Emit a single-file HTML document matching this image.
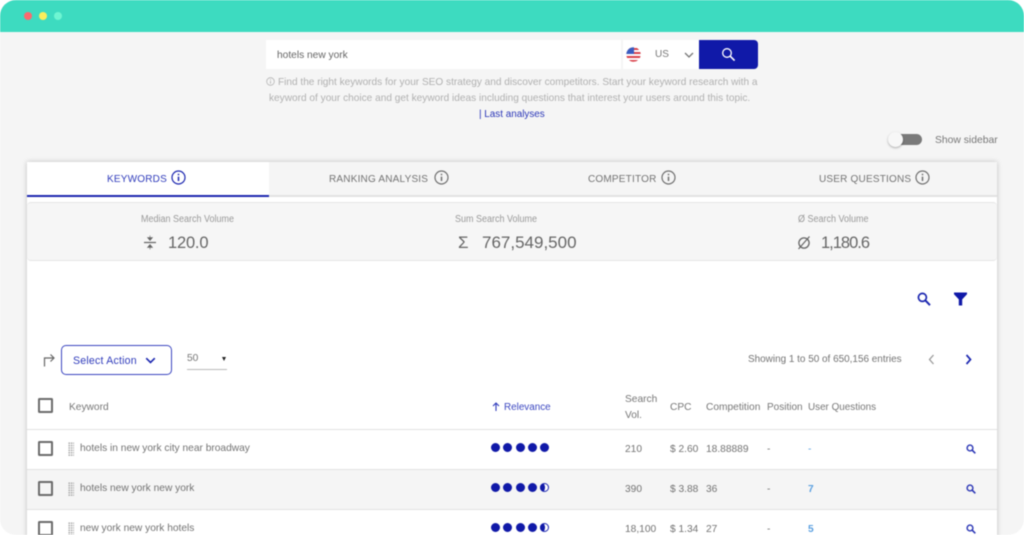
<!DOCTYPE html>
<html><head><meta charset="utf-8"><style>
html,body{margin:0;padding:0;background:#fff}
body{width:1024px;height:535px;overflow:hidden;position:relative;font-family:"Liberation Sans",sans-serif}
#w{position:absolute;left:0;top:0;width:1024px;height:535px;background:#f5f5f5;border-radius:16px;overflow:hidden;filter:blur(.4px)}
.a,.a2{position:absolute;white-space:nowrap}
.t{position:absolute;white-space:nowrap;font-size:10.2px;color:#737373;line-height:14px;transform:translateY(1px)}
.dot{position:absolute;width:9px;height:9px;border-radius:50%;background:#1019a8}
.cb{position:absolute;left:38px;width:11px;height:11px;border:2px solid #6b6b6b;border-radius:1.5px;background:transparent}
.row{position:absolute;left:27px;width:970px;height:39px;border-bottom:1px solid #e2e2e2}
.tab{position:absolute;top:173px;font-size:10px;letter-spacing:.2px;color:#737373;line-height:14px;white-space:nowrap}
svg{position:absolute;overflow:visible}
.lb{position:absolute;font-size:10px;color:#999;top:213px;line-height:13px;white-space:nowrap;transform:scaleX(.9);transform-origin:0 0}
.val{position:absolute;font-size:17px;color:#666;top:233px;line-height:20px;white-space:nowrap}
.grip{position:absolute;left:68px;width:6px;height:14px;background-image:radial-gradient(circle,#a8a8a8 0.8px,transparent 1px);background-size:2.4px 2.4px}
</style></head><body><div id="w">

<div class="a" style="left:0;top:0;width:1024px;height:32px;background:#3ddbc0"></div>
<div class="a" style="left:24px;top:12px;width:8px;height:8px;border-radius:50%;background:#fb6a6f"></div>
<div class="a" style="left:39px;top:12px;width:8px;height:8px;border-radius:50%;background:#fbee5b"></div>
<div class="a" style="left:54px;top:12px;width:8px;height:8px;border-radius:50%;background:#6ef5d2"></div>

<div class="a" style="left:266px;top:40px;width:355px;height:29px;background:#fff"></div>
<div class="a" style="left:623px;top:40px;width:77px;height:29px;background:#fff"></div>
<div class="t" style="left:277px;top:48px;font-size:10.2px;color:#666">hotels new york</div>

<svg style="left:626px;top:47px" width="15" height="15" viewBox="0 0 15 15">
<defs><clipPath id="fc"><circle cx="7.5" cy="7.5" r="7.2"/></clipPath></defs>
<g clip-path="url(#fc)"><rect width="15" height="15" fill="#fff"/>
<rect y="1" width="15" height="2" fill="#d9404a"/><rect y="5" width="15" height="2" fill="#d9404a"/><rect y="9" width="15" height="2" fill="#d9404a"/><rect y="13" width="15" height="2" fill="#d9404a"/>
<rect width="8" height="7" fill="#3a5cc0"/></g></svg>
<div class="t" style="left:655px;top:47px;font-size:10px;color:#777">US</div>
<svg style="left:684px;top:52px" width="10" height="6" viewBox="0 0 10 6"><path d="M1 1l4 4 4-4" fill="none" stroke="#777" stroke-width="1.3"/></svg>
<div class="a" style="left:699px;top:40px;width:59px;height:29px;background:#1019a8;border-radius:0 4px 4px 0"></div>
<svg style="left:721px;top:47px" width="15" height="15" viewBox="0 0 15 15"><circle cx="6" cy="6" r="4.3" fill="none" stroke="#fff" stroke-width="1.3"/><path d="M9.2 9.2l4.4 4.4" stroke="#fff" stroke-width="1.6"/></svg>

<svg style="left:266px;top:77px" width="9" height="9" viewBox="0 0 9 9"><circle cx="4.5" cy="4.5" r="3.8" fill="none" stroke="#b5b5b5" stroke-width=".8"/><path d="M4.5 4v2.6M4.5 2.3v1" stroke="#b5b5b5" stroke-width=".9"/></svg>
<div class="t" style="left:278px;top:75px;font-size:10.08px;color:#b0b0b0">Find the right keywords for your SEO strategy and discover competitors. Start your keyword research with a</div>
<div class="t" style="left:269px;top:91px;font-size:10.08px;color:#b0b0b0;letter-spacing:.01px">keyword of your choice and get keyword ideas including questions that interest your users around this topic.</div>
<div class="t" style="left:479px;top:107px;font-size:9.9px;color:#2b37b8">| Last analyses</div>

<div class="a" style="left:892px;top:134px;width:30px;height:11px;background:#7a7a7a;border-radius:6px"></div>
<div class="a" style="left:888px;top:132px;width:15px;height:15px;background:#f7f7f7;border-radius:50%;box-shadow:0 1px 2px rgba(0,0,0,.3)"></div>
<div class="t" style="left:935px;top:133px;font-size:10.35px;color:#777">Show sidebar</div>

<!-- card -->
<div class="a" style="left:27px;top:162px;width:970px;height:380px;background:#fff;box-shadow:0 0 5px rgba(0,0,0,.22)"></div>
<div class="a" style="left:269px;top:162px;width:728px;height:33px;background:#f5f5f5;border-bottom:2px solid #e2e2e2"></div>
<div class="a" style="left:27px;top:195px;width:242px;height:2px;background:#1c27b0"></div>
<div class="a" style="left:27px;top:202px;width:970px;height:57px;background:#f6f6f6;border:1px solid #e6e6e6;border-width:1px 0;border-radius:4px"></div>

<div class="tab" style="left:107px;color:#2f3bbb">KEYWORDS</div>
<svg style="left:171px;top:170px" width="15" height="15" viewBox="0 0 15 15"><circle cx="7.5" cy="7.5" r="6.5" fill="none" stroke="#1c27b0" stroke-width="1.2"/><path d="M7.5 6.6v4.4M7.5 3.8v1.5" stroke="#1c27b0" stroke-width="1.5"/></svg>
<div class="tab" style="left:329px">RANKING ANALYSIS</div>
<svg style="left:434px;top:170px" width="15" height="15" viewBox="0 0 15 15"><circle cx="7.5" cy="7.5" r="6.5" fill="none" stroke="#707070" stroke-width="1.2"/><path d="M7.5 6.6v4.4M7.5 3.8v1.5" stroke="#707070" stroke-width="1.5"/></svg>
<div class="tab" style="left:588px">COMPETITOR</div>
<svg style="left:661px;top:170px" width="15" height="15" viewBox="0 0 15 15"><circle cx="7.5" cy="7.5" r="6.5" fill="none" stroke="#707070" stroke-width="1.2"/><path d="M7.5 6.6v4.4M7.5 3.8v1.5" stroke="#707070" stroke-width="1.5"/></svg>
<div class="tab" style="left:819px">USER QUESTIONS</div>
<svg style="left:915px;top:170px" width="15" height="15" viewBox="0 0 15 15"><circle cx="7.5" cy="7.5" r="6.5" fill="none" stroke="#707070" stroke-width="1.2"/><path d="M7.5 6.6v4.4M7.5 3.8v1.5" stroke="#707070" stroke-width="1.5"/></svg>

<div class="lb" style="left:141px">Median Search Volume</div>
<div class="lb" style="left:455px">Sum Search Volume</div>
<div class="lb" style="left:798px">Ø Search Volume</div>
<svg style="left:143px;top:235px" width="14" height="15" viewBox="0 0 14 15"><path d="M1 7.5h12" stroke="#666" stroke-width="1.2"/><path d="M7 .5v2M4.5 2.5h5L7 5.5zM4.5 12.5h5L7 9.5zM7 12.5v2" fill="#666" stroke="#666" stroke-width=".6"/></svg>
<div class="val" style="left:168px;font-size:16.5px;letter-spacing:-.2px">120.0</div>
<div class="a" style="left:458px;top:233px;font-size:17px;line-height:20px;color:#666">Σ</div>
<div class="val" style="left:482px">767,549,500</div>
<svg style="left:797px;top:235px" width="14" height="15" viewBox="0 0 14 15"><circle cx="7" cy="8" r="5.1" fill="none" stroke="#666" stroke-width="1.3"/><path d="M1.5 14L12.5 1.5" stroke="#666" stroke-width="1.2"/></svg>
<div class="val" style="left:821px;font-size:16.5px;letter-spacing:-1px">1,180.6</div>

<svg style="left:917px;top:292px" width="14" height="14" viewBox="0 0 14 14"><circle cx="5.4" cy="5.4" r="4" fill="none" stroke="#1c27b0" stroke-width="1.7"/><path d="M8.4 8.4l4.6 4.8" stroke="#1c27b0" stroke-width="2"/></svg>
<svg style="left:954px;top:292px" width="13" height="14" viewBox="0 0 13 14"><path d="M0 .5h13v1.8L8.2 7.4V13.5H4.8V7.4L0 2.3z" fill="#1019a8"/></svg>

<svg style="left:43px;top:353px" width="13" height="14" viewBox="0 0 13 14"><path d="M1.5 13.5V5h9M7.5 1.5L11 5 7.5 8.5" fill="none" stroke="#666" stroke-width="1.2"/></svg>
<div class="a" style="left:61px;top:345px;width:109px;height:28px;border:1px solid #3b46c0;border-radius:5px"></div>
<div class="t" style="left:73px;top:353px;font-size:10.6px;color:#2f3bbb;letter-spacing:.2px">Select Action</div>
<svg style="left:145px;top:357px" width="11" height="7" viewBox="0 0 11 7"><path d="M1.2 1.2l4.3 4.3 4.3-4.3" fill="none" stroke="#1c27b0" stroke-width="1.6"/></svg>
<div class="t" style="left:187px;top:351px;font-size:10.2px;color:#777">50</div>
<div class="a" style="left:222px;top:357px;width:0;height:0;border:2.5px solid transparent;border-top:4px solid #222;border-bottom:0"></div>
<div class="a" style="left:187px;top:369px;width:40px;height:1px;background:#bbb"></div>

<div class="t" style="left:748px;top:352px;font-size:9.95px;color:#737373">Showing 1 to 50 of 650,156 entries</div>
<svg style="left:928px;top:354px" width="7" height="11" viewBox="0 0 7 11"><path d="M5.5 1L1.5 5.5l4 4.5" fill="none" stroke="#999" stroke-width="1.3"/></svg>
<svg style="left:965px;top:354px" width="7" height="11" viewBox="0 0 7 11"><path d="M1.5 1l4 4.5-4 4.5" fill="none" stroke="#1c27b0" stroke-width="1.7"/></svg>

<div class="cb" style="top:398px"></div>
<div class="t" style="left:69px;top:400px;color:#777">Keyword</div>
<svg style="left:492px;top:402px" width="8" height="9" viewBox="0 0 8 9"><path d="M4 9V1.2M1 4l3-3 3 3" fill="none" stroke="#2f3bbb" stroke-width="1.1"/></svg>
<div class="t" style="left:504px;top:400px;color:#3a46c0;font-size:9.9px">Relevance</div>
<div class="t" style="left:625px;top:391px;color:#777;line-height:16px">Search<br>Vol.</div>
<div class="t" style="left:670px;top:400px;color:#777">CPC</div>
<div class="t" style="left:706px;top:400px;color:#777">Competition</div>
<div class="t" style="left:767px;top:400px;color:#777;font-size:10px">Position</div>
<div class="t" style="left:808px;top:400px;color:#777;font-size:9.9px">User Questions</div>

<div class="row" style="top:390px;height:39px"></div>
<div class="row" style="top:430px"></div>
<div class="row" style="top:470px;background:#f5f5f5"></div>

<!-- row 1 -->
<div class="cb" style="top:441px"></div>
<div class="grip" style="top:442px"></div>
<div class="t" style="left:80px;top:441px">hotels in new york city near broadway</div>
<div class="dot" style="left:491px;top:443px"></div><div class="dot" style="left:503px;top:443px"></div><div class="dot" style="left:516px;top:443px"></div><div class="dot" style="left:528px;top:443px"></div><div class="dot" style="left:540px;top:443px"></div>
<div class="t" style="left:625px;top:442px">210</div>
<div class="t" style="left:670px;top:442px">$ 2.60</div>
<div class="t" style="left:706px;top:442px">18.88889</div>
<div class="t" style="left:767px;top:442px">-</div>
<div class="t" style="left:808px;top:442px;color:#5a9fe0">-</div>
<svg style="left:966px;top:444px" width="10" height="10" viewBox="0 0 10 10"><circle cx="4" cy="4" r="2.9" fill="none" stroke="#2a35b5" stroke-width="1.4"/><path d="M6.2 6.2L9.3 9.3" stroke="#2a35b5" stroke-width="1.6"/></svg>

<!-- row 2 -->
<div class="cb" style="top:481px"></div>
<div class="grip" style="top:482px"></div>
<div class="t" style="left:80px;top:481px">hotels new york new york</div>
<div class="dot" style="left:491px;top:483px"></div><div class="dot" style="left:503px;top:483px"></div><div class="dot" style="left:516px;top:483px"></div><div class="dot" style="left:528px;top:483px"></div>
<svg style="left:540px;top:483px" width="9" height="9" viewBox="0 0 9 9"><circle cx="4.5" cy="4.5" r="4" fill="#fff" stroke="#1c27b0" stroke-width="1"/><path d="M3.2 .2A4.5 4.5 0 0 0 3.2 8.8A6 6 0 0 0 3.2 .2z" fill="#1019a8"/></svg>
<div class="t" style="left:625px;top:482px">390</div>
<div class="t" style="left:670px;top:482px">$ 3.88</div>
<div class="t" style="left:706px;top:482px">36</div>
<div class="t" style="left:767px;top:482px">-</div>
<div class="t" style="left:808px;top:482px;color:#5a9fe0;font-weight:bold">7</div>
<svg style="left:966px;top:484px" width="10" height="10" viewBox="0 0 10 10"><circle cx="4" cy="4" r="2.9" fill="none" stroke="#2a35b5" stroke-width="1.4"/><path d="M6.2 6.2L9.3 9.3" stroke="#2a35b5" stroke-width="1.6"/></svg>

<!-- row 3 -->
<div class="cb" style="top:521px"></div>
<div class="grip" style="top:522px"></div>
<div class="t" style="left:80px;top:521px">new york new york hotels</div>
<div class="dot" style="left:491px;top:523px"></div><div class="dot" style="left:503px;top:523px"></div><div class="dot" style="left:516px;top:523px"></div><div class="dot" style="left:528px;top:523px"></div>
<svg style="left:540px;top:523px" width="9" height="9" viewBox="0 0 9 9"><circle cx="4.5" cy="4.5" r="4" fill="#fff" stroke="#1c27b0" stroke-width="1"/><path d="M3.2 .2A4.5 4.5 0 0 0 3.2 8.8A6 6 0 0 0 3.2 .2z" fill="#1019a8"/></svg>
<div class="t" style="left:625px;top:522px">18,100</div>
<div class="t" style="left:670px;top:522px">$ 1.34</div>
<div class="t" style="left:706px;top:522px">27</div>
<div class="t" style="left:767px;top:522px">-</div>
<div class="t" style="left:808px;top:522px;color:#5a9fe0;font-weight:bold">5</div>
<svg style="left:966px;top:524px" width="10" height="10" viewBox="0 0 10 10"><circle cx="4" cy="4" r="2.9" fill="none" stroke="#2a35b5" stroke-width="1.4"/><path d="M6.2 6.2L9.3 9.3" stroke="#2a35b5" stroke-width="1.6"/></svg>

</div></body></html>
